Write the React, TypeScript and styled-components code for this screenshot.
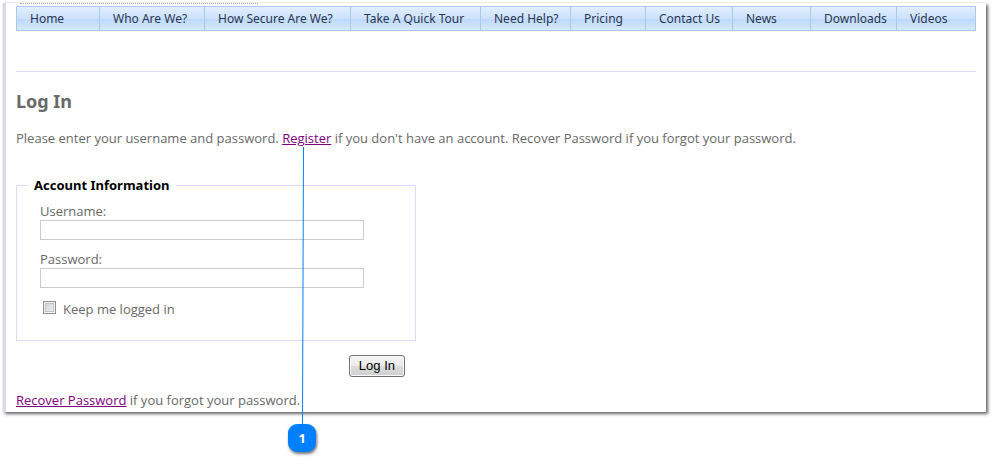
import React from "react";
import styled, { createGlobalStyle } from "styled-components";

const GlobalStyle = createGlobalStyle`
  * { box-sizing: border-box; }
  body {
    margin: 0;
    background: #fff;
    color: #696969;
    font: 13px/16px "Open Sans", sans-serif;
  }
`;

const Sheet = styled.div`
  margin: 3px 8px 60px 3px;
  padding: 0 10px 4px;
  border-left: 3px solid #d9d9ea;
  background: #fff;
  box-shadow: 2px 2px 3px #666, 0 0 2px #ddd;
`;

const DottedRule = styled.div`
  width: 238px;
  height: 3px;
  margin-left: 4px;
  border-top: 1px dotted #aaa;
`;

const Menu = styled.nav`
  display: grid;
  grid-template-columns: 83fr 105fr 146fr 130fr 90fr 75fr 87fr 78fr 86fr 79fr;
  border: 1px solid #a9c9f2;
  border-right: 0;
  background: linear-gradient(#e2effe 0, #cce1fb 50%, #bcd8f9 52%, #d9eafe 100%);
`;

const MenuLink = styled.a`
  padding: 4px 0 3px 13px;
  border-right: 1px solid #a9c9f2;
  color: #283551;
  font: 12px/16px "Noto Sans", sans-serif;
  text-decoration: none;
  white-space: nowrap;
`;

const Content = styled.main`
  margin-top: 40px;
  border-top: 1px solid #dbdbf0;
`;

const Title = styled.h1`
  margin: 17px 0;
  font: 700 18px/24px "Noto Sans", sans-serif;
`;

const Text = styled.p`
  margin: 0;
`;

const TextLink = styled.a`
  color: #800080;
`;

const Anchor = styled.span`
  position: relative;
`;

const Callout = styled.span`
  position: absolute;
  top: 100%;
  right: 15px;
  display: flex;
  flex-direction: column;
  width: 28px;
  pointer-events: none;
`;

const CalloutLine = styled.svg`
  display: block;
  width: 28px;
  height: 277px;
  stroke: #0080ff;
`;

const CalloutBadge = styled.span`
  width: 28px;
  height: 28px;
  border-radius: 9px;
  background: #0080ff;
  box-shadow: 1px 2px 3px #777;
  color: #fff;
  font-weight: 700;
  line-height: 28px;
  text-align: center;
`;

const LoginForm = styled.form`
  display: flex;
  flex-direction: column;
  max-width: 400px;
  margin-top: 30px;
`;

const Group = styled.fieldset`
  min-width: 0;
  margin: 0;
  padding: 9px 23px 23px;
  border: 1px solid #dbdbff;
`;

const Legend = styled.legend`
  margin-left: -12px;
  padding: 0 6px;
  color: #000;
  font: 700 13px/18px "Noto Sans", sans-serif;
`;

const Field = styled.div`
  display: flex;
  flex-direction: column;
  gap: 1px;
  margin-bottom: 11px;
`;

const Input = styled.input`
  width: 324px;
  max-width: 100%;
  height: 20px;
  padding: 2px;
  border: 1px solid #ccc;
  background: #fff;
  font: inherit;
`;

const CheckRow = styled.div`
  display: flex;
  align-items: center;
  gap: 7px;
  padding: 2px 3px 0;
`;

const Checkbox = styled.input`
  appearance: none;
  width: 13px;
  height: 13px;
  margin: 0 0 3px;
  border: 1px solid #8e8f8f;
  background: linear-gradient(135deg, #c8ccd3, #f6f6f6);
  box-shadow: inset 0 0 0 1px #f4f4f4, inset 0 0 0 2px #c0c4ca;
  &:checked { background: #357; }
`;

const SubmitButton = styled.button`
  align-self: flex-end;
  height: 22px;
  margin: 14px 11px 15px 0;
  padding: 0 9px;
  border: 1px solid #707070;
  border-radius: 3px;
  background: linear-gradient(#f2f2f2 0, #ebebeb 49%, #ddd 51%, #cfcfcf 100%);
  box-shadow: inset 0 0 0 1px #fafafa;
  color: #000;
  font: 13px/20px "Liberation Sans", sans-serif;
`;

const sections = [
  "Home",
  "Who Are We?",
  "How Secure Are We?",
  "Take A Quick Tour",
  "Need Help?",
  "Pricing",
  "Contact Us",
  "News",
  "Downloads",
  "Videos",
];

export default function App() {
  return (
    <>
      <GlobalStyle />
      <Sheet>
        <DottedRule />
        <Menu>
          {sections.map((name) => (
            <MenuLink key={name} href="#">{name}</MenuLink>
          ))}
        </Menu>
        <Content>
          <Title>Log In</Title>
          <Text>
            Please enter your username and password.{" "}
            <Anchor>
              <TextLink href="#">Register</TextLink>
              <Callout>
                <CalloutLine viewBox="0 0 28 277" aria-hidden="true">
                  <line x1="15.5" y1="0" x2="14.5" y2="277" />
                </CalloutLine>
                <CalloutBadge>1</CalloutBadge>
              </Callout>
            </Anchor>{" "}
            if you don't have an account. Recover Password if you forgot your password.
          </Text>
          <LoginForm onSubmit={(event) => event.preventDefault()}>
            <Group>
              <Legend>Account Information</Legend>
              <Field>
                <label htmlFor="username">Username:</label>
                <Input id="username" type="text" />
              </Field>
              <Field>
                <label htmlFor="password">Password:</label>
                <Input id="password" type="password" />
              </Field>
              <CheckRow>
                <Checkbox id="remember" type="checkbox" />
                <label htmlFor="remember">Keep me logged in</label>
              </CheckRow>
            </Group>
            <SubmitButton type="submit">Log In</SubmitButton>
          </LoginForm>
          <Text>
            <TextLink href="#">Recover Password</TextLink> if you forgot your password.
          </Text>
        </Content>
      </Sheet>
    </>
  );
}
